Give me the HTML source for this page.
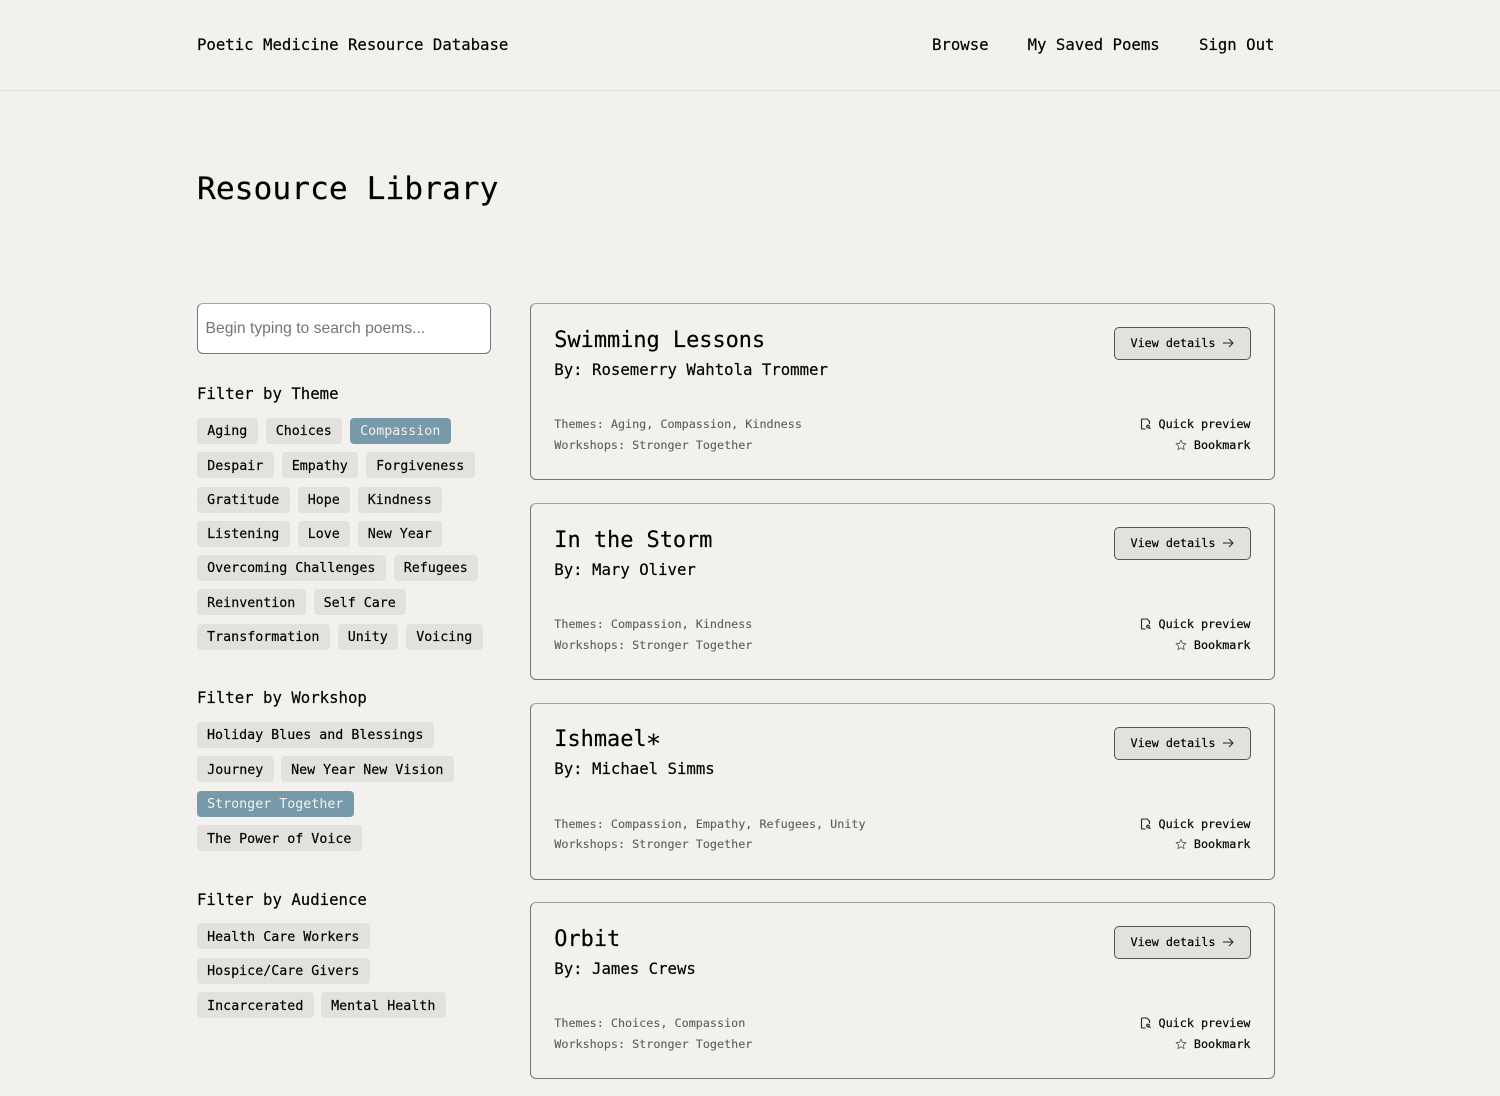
<!DOCTYPE html>
<html lang="en"><head><meta charset="utf-8"><title>Resource Library</title>
<style>
*{box-sizing:border-box;margin:0;padding:0}
html,body{width:1500px;height:1096px;overflow:hidden;background:#f2f1ed;color:#000;font-family:"DejaVu Sans Mono","Liberation Mono",monospace;-webkit-text-stroke:.18px currentColor}
.t{position:absolute;white-space:pre;line-height:20px}
.hr{position:absolute;left:0;top:90px;width:1500px;height:1px;background:#e0dfdb}
.n{font-size:15.68px}
h1{position:absolute;left:197px;top:169px;font-weight:400;font-size:31.3px;line-height:40px;white-space:pre}
.search{position:absolute;left:197px;top:303px;width:294px;height:51px;background:#fff;border:1px solid #77776f;border-top-color:#a5a5a0;border-radius:6px;font:15.7px/50px "Liberation Sans",sans-serif;color:#757575;padding-left:7.5px;-webkit-text-stroke:0}
.tag{position:absolute;height:26px;line-height:27px;background:#e2e1dd;border-radius:4px;font-size:13.32px;text-align:center;white-space:pre;text-indent:-.5px}
.d{line-height:29px}
.on{background:#769aaa;color:#f2f1ed;-webkit-text-stroke:0}
.card{position:absolute;left:530px;width:745px;height:177px;border:1px solid #77776f;border-top-color:#a0a09a;border-radius:6px}
.card .ti{position:absolute;left:23.3px;top:22.5px;font-size:21.9px;line-height:28px;white-space:pre}
.card .by{position:absolute;left:23.3px;top:56px;font-size:15.68px;line-height:20px;white-space:pre}
.card .m{position:absolute;left:23.3px;font-size:11.76px;line-height:20px;color:#5c5c58;white-space:pre;-webkit-text-stroke:.1px currentColor}
.btn{position:absolute;left:583px;top:23px;width:137px;height:33px;background:#e2e1dd;border:1px solid #55554f;border-radius:5px;font-size:11.76px;line-height:31px;padding-left:15.5px;white-space:pre}
.btn svg{position:absolute;left:107px;top:9px;-webkit-text-stroke:0}
.a{position:absolute;right:23.5px;font-size:11.76px;line-height:20px;white-space:pre}
.a svg{position:absolute;top:4px}
.ast{display:inline-block;position:relative;top:5.5px;transform:scale(1.15)}
</style></head><body>
<div class="t n" style="left:197px;top:35px">Poetic Medicine Resource Database</div>
<div class="t n" style="left:932px;top:35px">Browse</div>
<div class="t n" style="left:1027.6px;top:35px">My Saved Poems</div>
<div class="t n" style="left:1199px;top:35px">Sign Out</div>
<div class="hr"></div>
<h1>Resource Library</h1>
<div class="search">Begin typing to search poems...</div>

<div class="t n" style="left:197px;top:384px">Filter by Theme</div>
<div class="tag" style="left:197px;top:418px;width:61px">Aging</div>
<div class="tag" style="left:266px;top:418px;width:76px">Choices</div>
<div class="tag on" style="left:350px;top:418px;width:101px">Compassion</div>
<div class="tag d" style="left:197px;top:452px;width:77px">Despair</div>
<div class="tag d" style="left:282px;top:452px;width:76px">Empathy</div>
<div class="tag d" style="left:366px;top:452px;width:109px">Forgiveness</div>
<div class="tag" style="left:197px;top:487px;width:93px">Gratitude</div>
<div class="tag" style="left:298px;top:487px;width:52px">Hope</div>
<div class="tag" style="left:358px;top:487px;width:84px">Kindness</div>
<div class="tag" style="left:197px;top:521px;width:93px">Listening</div>
<div class="tag" style="left:298px;top:521px;width:52px">Love</div>
<div class="tag" style="left:358px;top:521px;width:84px">New Year</div>
<div class="tag" style="left:197px;top:555px;width:189px">Overcoming Challenges</div>
<div class="tag" style="left:394px;top:555px;width:84px">Refugees</div>
<div class="tag d" style="left:197px;top:589px;width:109px">Reinvention</div>
<div class="tag d" style="left:314px;top:589px;width:92px">Self Care</div>
<div class="tag" style="left:197px;top:624px;width:133px">Transformation</div>
<div class="tag" style="left:338px;top:624px;width:60px">Unity</div>
<div class="tag" style="left:406px;top:624px;width:77px">Voicing</div>

<div class="t n" style="left:197px;top:688px">Filter by Workshop</div>
<div class="tag" style="left:197px;top:722px;width:237px">Holiday Blues and Blessings</div>
<div class="tag d" style="left:197px;top:756px;width:77px">Journey</div>
<div class="tag d" style="left:281px;top:756px;width:173px">New Year New Vision</div>
<div class="tag on" style="left:197px;top:791px;width:157px">Stronger Together</div>
<div class="tag d" style="left:197px;top:825px;width:165px">The Power of Voice</div>

<div class="t n" style="left:197px;top:890px">Filter by Audience</div>
<div class="tag d" style="left:197px;top:923px;width:173px">Health Care Workers</div>
<div class="tag" style="left:197px;top:958px;width:173px">Hospice/Care Givers</div>
<div class="tag d" style="left:197px;top:992px;width:117px">Incarcerated</div>
<div class="tag d" style="left:321px;top:992px;width:125px">Mental Health</div>

<div class="card" style="top:303px"><div class="ti">Swimming Lessons</div><div class="by">By: Rosemerry Wahtola Trommer</div>
<div class="m" style="top:110px">Themes: Aging, Compassion, Kindness</div><div class="m" style="top:131px">Workshops: Stronger Together</div>
<div class="btn">View details<svg width="12" height="12" viewBox="0 0 12 12" fill="none" stroke="#222" stroke-width="1"><path d="M1 6H11M7 2l4 4-4 4"/></svg></div>
<div class="a" style="top:110px">Quick preview<svg style="left:-19px" width="12" height="12" viewBox="0 0 12 12" fill="none" stroke="#222" stroke-width="1.1"><path d="M5.5 11H2.2Q1.5 11 1.5 10.300V1.700Q1.500 1 2.200 1H7L9.500 3.500V6"/><circle cx="8" cy="8.500" r="1.300"/><path d="M9 9.500L10.500 11"/></svg></div>
<div class="a" style="top:131px">Bookmark<svg style="left:-19px" width="12" height="12" viewBox="0 0 12 12" fill="none" stroke="#555" stroke-width=".8" stroke-linejoin="round"><path d="M6 1L7.500 4.300 11 4.700 8.400 7 9.100 10.600 6 8.800 2.900 10.600 3.600 7 1 4.700 4.500 4.300Z"/></svg></div></div>

<div class="card" style="top:503px"><div class="ti">In the Storm</div><div class="by">By: Mary Oliver</div>
<div class="m" style="top:110px">Themes: Compassion, Kindness</div><div class="m" style="top:131px">Workshops: Stronger Together</div>
<div class="btn">View details<svg width="12" height="12" viewBox="0 0 12 12" fill="none" stroke="#222" stroke-width="1"><path d="M1 6H11M7 2l4 4-4 4"/></svg></div>
<div class="a" style="top:110px">Quick preview<svg style="left:-19px" width="12" height="12" viewBox="0 0 12 12" fill="none" stroke="#222" stroke-width="1.1"><path d="M5.5 11H2.2Q1.5 11 1.5 10.300V1.700Q1.500 1 2.200 1H7L9.500 3.500V6"/><circle cx="8" cy="8.500" r="1.300"/><path d="M9 9.500L10.500 11"/></svg></div>
<div class="a" style="top:131px">Bookmark<svg style="left:-19px" width="12" height="12" viewBox="0 0 12 12" fill="none" stroke="#555" stroke-width=".8" stroke-linejoin="round"><path d="M6 1L7.500 4.300 11 4.700 8.400 7 9.100 10.600 6 8.800 2.900 10.600 3.600 7 1 4.700 4.500 4.300Z"/></svg></div></div>

<div class="card" style="top:703px"><div class="ti" style="top:21.500px">Ishmael<span class="ast">*</span></div><div class="by" style="top:55px">By: Michael Simms</div>
<div class="m" style="top:110px">Themes: Compassion, Empathy, Refugees, Unity</div><div class="m" style="top:130px">Workshops: Stronger Together</div>
<div class="btn">View details<svg width="12" height="12" viewBox="0 0 12 12" fill="none" stroke="#222" stroke-width="1"><path d="M1 6H11M7 2l4 4-4 4"/></svg></div>
<div class="a" style="top:110px">Quick preview<svg style="left:-19px" width="12" height="12" viewBox="0 0 12 12" fill="none" stroke="#222" stroke-width="1.1"><path d="M5.5 11H2.2Q1.5 11 1.5 10.300V1.700Q1.500 1 2.200 1H7L9.500 3.500V6"/><circle cx="8" cy="8.500" r="1.300"/><path d="M9 9.500L10.500 11"/></svg></div>
<div class="a" style="top:130px">Bookmark<svg style="left:-19px" width="12" height="12" viewBox="0 0 12 12" fill="none" stroke="#555" stroke-width=".8" stroke-linejoin="round"><path d="M6 1L7.500 4.300 11 4.700 8.400 7 9.100 10.600 6 8.800 2.900 10.600 3.600 7 1 4.700 4.500 4.300Z"/></svg></div></div>

<div class="card" style="top:902px"><div class="ti">Orbit</div><div class="by">By: James Crews</div>
<div class="m" style="top:110px">Themes: Choices, Compassion</div><div class="m" style="top:131px">Workshops: Stronger Together</div>
<div class="btn">View details<svg width="12" height="12" viewBox="0 0 12 12" fill="none" stroke="#222" stroke-width="1"><path d="M1 6H11M7 2l4 4-4 4"/></svg></div>
<div class="a" style="top:110px">Quick preview<svg style="left:-19px" width="12" height="12" viewBox="0 0 12 12" fill="none" stroke="#222" stroke-width="1.1"><path d="M5.5 11H2.2Q1.5 11 1.5 10.300V1.700Q1.500 1 2.200 1H7L9.500 3.500V6"/><circle cx="8" cy="8.500" r="1.300"/><path d="M9 9.500L10.500 11"/></svg></div>
<div class="a" style="top:131px">Bookmark<svg style="left:-19px" width="12" height="12" viewBox="0 0 12 12" fill="none" stroke="#555" stroke-width=".8" stroke-linejoin="round"><path d="M6 1L7.500 4.300 11 4.700 8.400 7 9.100 10.600 6 8.800 2.900 10.600 3.600 7 1 4.700 4.500 4.300Z"/></svg></div></div>
</body></html>
